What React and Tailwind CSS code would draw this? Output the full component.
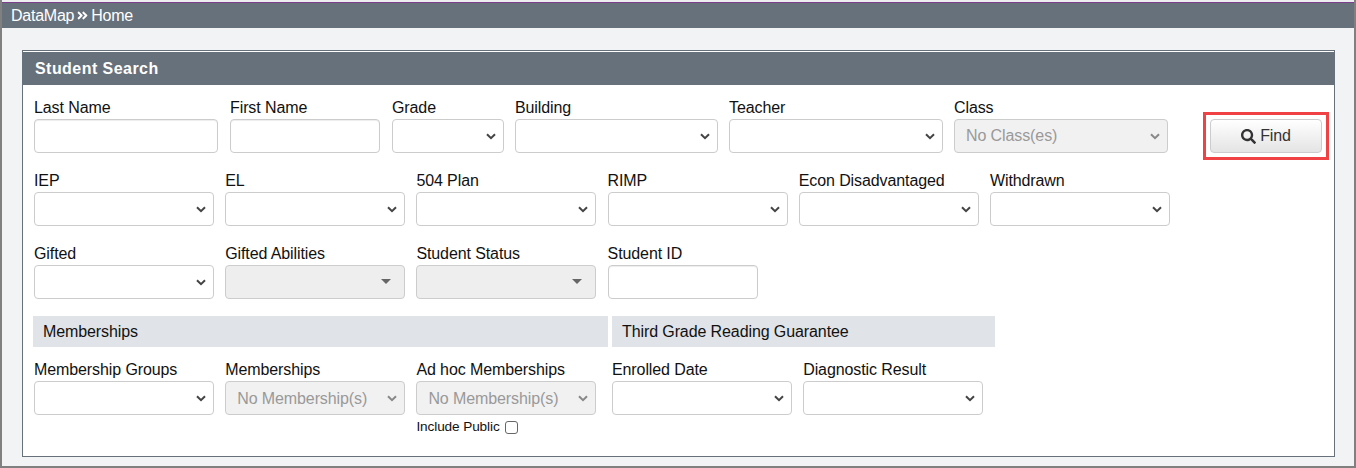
import { FaAngleDoubleRight, FaSearch } from "react-icons/fa";

function Chevron({ muted }) {
  return (
    <svg
      className={`absolute right-[7px] top-[13px] w-[10px] h-[7px] ${muted ? "text-[#888]" : "text-[#444]"}`}
      viewBox="0 0 10 7"
      fill="none"
      stroke="currentColor"
      strokeWidth="2"
    >
      <path d="M1 1.2l4 4 4-4" />
    </svg>
  );
}

function Label({ children }) {
  return <label className="block h-[22px] leading-[22px] text-[16px] text-[#111] whitespace-nowrap">{children}</label>;
}

function TextField({ label, className }) {
  return (
    <div className={className}>
      <Label>{label}</Label>
      <input
        type="text"
        className="block w-full h-[34px] bg-white border border-[#ccc] rounded-[4px] shadow-[inset_0_1px_1px_rgba(0,0,0,0.075)]"
      />
    </div>
  );
}

function SelectField({ label, className = "w-[180px]", value, disabled, low }) {
  return (
    <div className={className}>
      <Label>{label}</Label>
      <div
        className={`relative h-[34px] px-[11px] text-[16px] border border-[#ccc] rounded-[4px] ${
          low ? "leading-[34px]" : "leading-[32px]"
        } ${disabled ? "bg-[#f1f1f1] text-[#999]" : "bg-white"}`}
      >
        {value}
        <Chevron muted={disabled} />
      </div>
    </div>
  );
}

function CaretField({ label }) {
  return (
    <div className="w-[180px]">
      <Label>{label}</Label>
      <div className="relative h-[34px] bg-[#eee] border border-[#ccc] rounded-[4px]">
        <span className="absolute right-[13px] top-[13px] border-x-[5px] border-x-transparent border-t-[5px] border-t-[#666]" />
      </div>
    </div>
  );
}

export default function App() {
  return (
    <div className="h-[468px] flex flex-col bg-[#f1f3f5] border-x-2 border-b-2 border-[#808080] font-['Liberation_Sans',Arial,sans-serif] text-[#111] tracking-[-0.1px]">
      <div className="h-[3px] bg-[#eceef0] border-b border-[#7b3f8c]" />
      <div className="h-[25px] flex items-center gap-[3px] bg-[#67717c] text-white text-[16px] tracking-[-0.25px] pl-[9px]">
        DataMap
        <FaAngleDoubleRight className="w-[11px] h-[13px]" />
        Home
      </div>

      <div className="flex-1 pt-[22px] pb-[9px] pl-[20px] pr-[19px]">
        <div className="h-full bg-white border border-[#67717c] pt-px">
          <div className="h-[33px] bg-[#67717c] text-white font-bold text-[16px] tracking-[0.45px] leading-[33px] pl-[12px]">
            Student Search
          </div>

          <div className="pl-[11px] pt-[12px]">
            <div className="flex gap-x-[11px]">
              <TextField label="Last Name" className="w-[184px] mr-px" />
              <TextField label="First Name" className="w-[150px] mr-px" />
              <SelectField label="Grade" className="w-[112px]" />
              <SelectField label="Building" className="w-[203px]" />
              <SelectField label="Teacher" className="w-[214px]" />
              <SelectField label="Class" className="w-[214px]" value="No Class(es)" disabled />
              <button className="relative ml-[31px] mt-[22px] w-[112px] h-[34px] flex items-center justify-center gap-[4px] text-[16px] text-[#333] border border-[#ccc] rounded-[4px] bg-gradient-to-b from-white to-[#e4e4e4]">
                <FaSearch className="w-[15px] h-[15px]" />
                Find
                <span className="absolute -inset-[8px] border-[3px] border-[#f04145]" />
              </button>
            </div>

            <div className="flex gap-x-[11.2px] mt-[17px]">
              <SelectField label="IEP" />
              <SelectField label="EL" />
              <SelectField label="504 Plan" />
              <SelectField label="RIMP" />
              <SelectField label="Econ Disadvantaged" />
              <SelectField label="Withdrawn" />
            </div>

            <div className="flex gap-x-[11.2px] mt-[17px]">
              <SelectField label="Gifted" />
              <CaretField label="Gifted Abilities" />
              <CaretField label="Student Status" />
              <TextField label="Student ID" className="w-[150px]" />
            </div>

            <div className="flex mt-[17px] -ml-px">
              <section className="w-[575px]">
                <h3 className="h-[31px] bg-[#e0e3e7] text-[16px] leading-[31px] pl-[10px]">Memberships</h3>
                <div className="flex gap-x-[11.2px] mt-[12px] pl-px">
                  <SelectField label="Membership Groups" />
                  <SelectField label="Memberships" value="No Membership(s)" disabled low />
                  <div>
                    <SelectField label="Ad hoc Memberships" value="No Membership(s)" disabled low />
                    <div className="flex items-center gap-[5px] mt-[3px] text-[13.6px] leading-[18px]">
                      Include Public
                      <span className="w-[13px] h-[13px] border border-[#666] rounded-[3px] bg-white" />
                    </div>
                  </div>
                </div>
              </section>
              <section className="w-[383px] ml-[4px]">
                <h3 className="h-[31px] bg-[#e0e3e7] text-[16px] leading-[31px] pl-[10px]">Third Grade Reading Guarantee</h3>
                <div className="flex gap-x-[11.2px] mt-[12px]">
                  <SelectField label="Enrolled Date" />
                  <SelectField label="Diagnostic Result" />
                </div>
              </section>
            </div>
          </div>
        </div>
      </div>
    </div>
  );
}
